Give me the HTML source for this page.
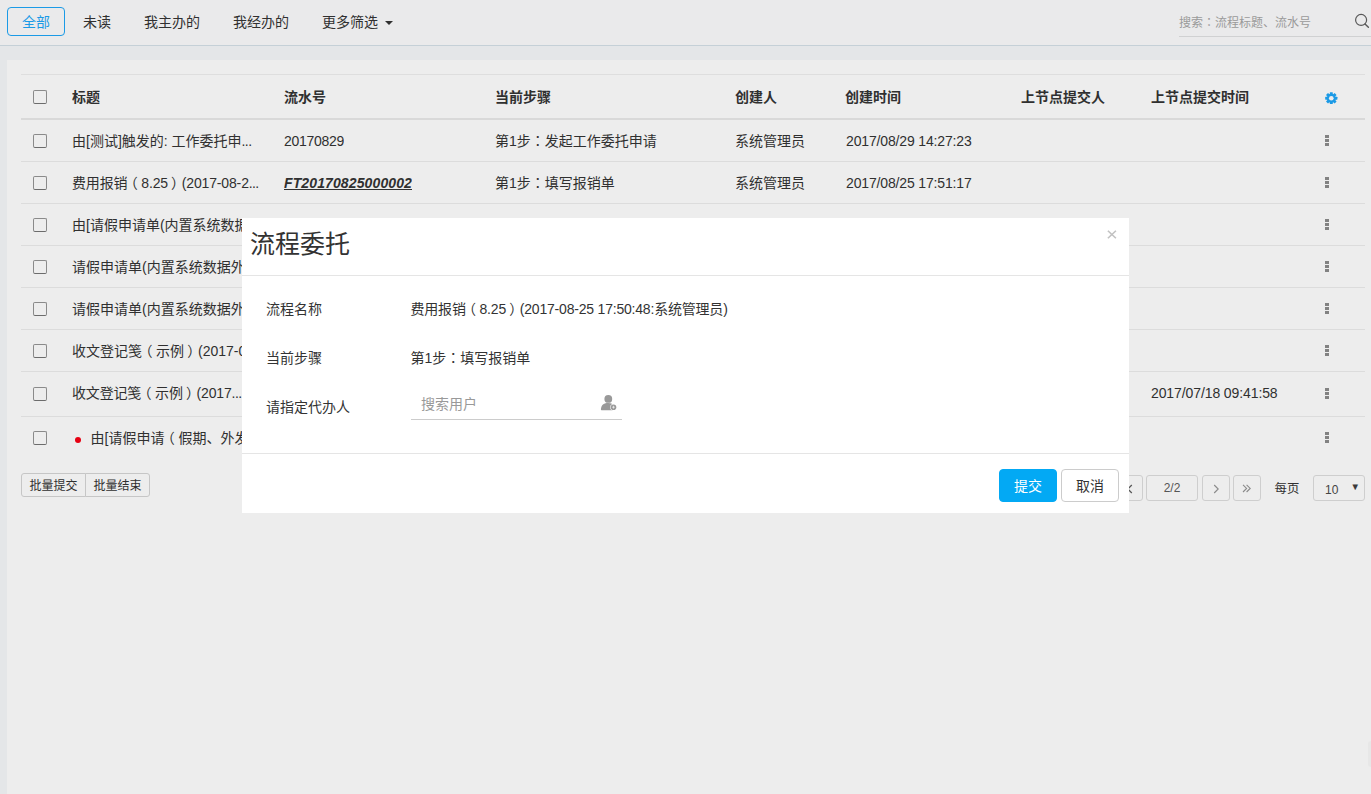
<!DOCTYPE html>
<html lang="zh-CN">
<head>
<meta charset="utf-8">
<title>流程委托</title>
<style>
*{box-sizing:border-box;}
html,body{margin:0;padding:0;}
body{width:1371px;height:794px;overflow:hidden;position:relative;background:#e4e6e8;
  font-family:"Liberation Sans","Noto Sans CJK SC",sans-serif;font-size:14px;color:#303030;}
.abs{position:absolute;}
/* top bar */
.topbar{position:absolute;left:0;top:0;width:1371px;height:46px;background:#eaeaeb;border-bottom:1px solid #c5d0d7;}
.tab{position:absolute;top:7px;height:29px;line-height:28.6px;padding:0 14px;border:1px solid transparent;border-radius:4px;font-size:14px;color:#303030;white-space:nowrap;}
.tab.on{border-color:#1b9ae6;color:#1b9ae6;}
.caret{position:absolute;left:385px;top:21.3px;width:0;height:0;border-left:4.5px solid transparent;border-right:4.5px solid transparent;border-top:4.5px solid #303030;}
.search{position:absolute;left:1179px;top:0;width:192px;height:37px;border-bottom:1px solid #d0d1d2;}
.search>span{position:absolute;left:0;top:13.5px;line-height:18px;font-size:12px;color:#9a9a9a;white-space:nowrap;}
/* panel */
.panel{position:absolute;left:7px;top:60px;width:1364px;height:734px;background:#ededed;}
.tbl{position:absolute;left:21px;top:74px;width:1344px;}
.row{position:absolute;left:0;width:1344px;border-bottom:1px solid #dcdcdc;}
.row.head{top:0;height:46px;border-top:1px solid #dedede;border-bottom:2px solid #d9d9d9;font-weight:bold;}
.cell{position:absolute;top:0;height:100%;padding-top:1px;white-space:nowrap;overflow:hidden;text-overflow:ellipsis;}
.cb{position:absolute;left:12px;width:14px;height:14px;border:1px solid #8a8a8a;border-bottom-color:#6c6c6c;border-radius:2px;background:#ededed;}
.dots{position:absolute;left:1304px;width:4px;height:11px;}
.dots i{display:block;width:3.6px;height:3px;background:#828282;margin-bottom:1px;}
.sn{letter-spacing:.12px;font-style:italic;text-decoration:underline;color:#303030;}
.pl{position:relative;left:-3.6px;}
.pr{position:relative;left:3.2px;}
.el{letter-spacing:-.6px;}
.fc{font-family:"Noto Sans CJK TC",sans-serif;line-height:0;}
.red{position:absolute;left:53.8px;width:6.5px;height:6.5px;border-radius:50%;background:#e60012;}
/* bottom controls */
.bbtn{position:absolute;top:473px;height:24px;line-height:24px;font-size:12px;border:1px solid #c6c6c6;background:#ededed;text-align:center;color:#303030;}
.pg{position:absolute;top:475px;height:26px;border:1px solid #cecece;border-radius:3px;background:#ededed;font-size:12px;line-height:24px;text-align:center;color:#555;}
/* modal */
.modal{position:absolute;left:242px;top:218px;width:887px;height:295px;background:#fff;}
.mhead{position:absolute;left:0;top:0;width:887px;height:58px;border-bottom:1px solid #e5e5e5;}
.mtitle{position:absolute;left:8px;top:8px;font-size:25px;line-height:36px;color:#333;white-space:nowrap;}
.mfoot{position:absolute;left:0;top:235px;width:887px;height:60px;border-top:1px solid #e5e5e5;}
.lbl{position:absolute;left:24px;font-size:14px;line-height:20px;color:#333;white-space:nowrap;}
.val{position:absolute;left:168.5px;font-size:14px;line-height:20px;color:#333;white-space:nowrap;}
.btn{position:absolute;top:251px;width:58px;height:33px;line-height:33px;border-radius:4px;font-size:14px;text-align:center;border:1px solid #ccc;background:#fff;color:#333;}
.btn.pri{background:#03a9f4;border-color:#03a9f4;color:#fff;}
</style>
</head>
<body>

<div class="topbar">
  <div class="tab on" style="left:7px;">全部</div>
  <div class="tab" style="left:68px;">未读</div>
  <div class="tab" style="left:129px;">我主办的</div>
  <div class="tab" style="left:218px;">我经办的</div>
  <div class="tab" style="left:307px;">更多筛选</div>
  <div class="caret"></div>
  <div class="search"><span>搜索<span class="fc" lang="zh-TW">：</span>流程标题、流水号</span>
    <svg class="abs" style="left:174px;top:12px" width="18" height="18" viewBox="0 0 18 18"><circle cx="8.1" cy="7.95" r="5.5" fill="none" stroke="#585858" stroke-width="1.2"/><path d="M12 11.9 L15.4 15.3" stroke="#585858" stroke-width="1.4" stroke-linecap="round"/></svg>
  </div>
</div>

<div class="panel"></div>

<div class="tbl" id="tbl">
  <div class="row head">
    <span class="cb" style="top:15px"></span>
    <div class="cell" style="left:51px;line-height:43px;">标题</div>
    <div class="cell" style="left:263px;line-height:43px;">流水号</div>
    <div class="cell" style="left:474px;line-height:43px;">当前步骤</div>
    <div class="cell" style="left:714px;line-height:43px;">创建人</div>
    <div class="cell" style="left:824px;line-height:43px;">创建时间</div>
    <div class="cell" style="left:1000px;line-height:43px;">上节点提交人</div>
    <div class="cell" style="left:1130px;line-height:43px;">上节点提交时间</div>
    <svg class="abs" style="left:1304.3px;top:16.6px" width="12.6" height="12.6" viewBox="-6.5 -6.5 13 13"><g fill="#1b9ae6"><circle r="4.6"/><rect x="-1.5" y="-6.3" width="3" height="12.6" rx=".4"/><rect x="-6.3" y="-1.5" width="12.6" height="3" rx=".4"/><g transform="rotate(45)"><rect x="-1.5" y="-6.3" width="3" height="12.6" rx=".4"/><rect x="-6.3" y="-1.5" width="12.6" height="3" rx=".4"/></g></g><circle r="2.4" fill="#ededed"/></svg>
  </div>
  <div class="row" style="top:46px;height:42px;">
    <span class="cb" style="top:14px"></span>
    <div class="cell" style="left:51px;width:191px;line-height:41px;">由[测试]触发的: 工作委托申<span class="el">...</span></div>
    <div class="cell" style="left:263px;line-height:41px;letter-spacing:-.3px;">20170829</div>
    <div class="cell" style="left:474px;line-height:41px;">第1步<span class="fc" lang="zh-TW">：</span>发起工作委托申请</div>
    <div class="cell" style="left:714px;line-height:41px;">系统管理员</div>
    <div class="cell" style="left:825px;line-height:41px;letter-spacing:-.15px;">2017/08/29 14:27:23</div>
    <span class="dots" style="top:15px"><i></i><i></i><i></i></span>
  </div>
  <div class="row" style="top:88px;height:42px;">
    <span class="cb" style="top:14px"></span>
    <div class="cell" style="left:51px;width:191px;line-height:41px;"><span style="letter-spacing:-.15px">费用报销<span class="pl">（</span>8.25<span class="pr">）</span>(2017-08-2<span class="el">...</span></span></div>
    <div class="cell" style="left:263px;line-height:41px;"><b class="sn">FT20170825000002</b></div>
    <div class="cell" style="left:474px;line-height:41px;">第1步<span class="fc" lang="zh-TW">：</span>填写报销单</div>
    <div class="cell" style="left:714px;line-height:41px;">系统管理员</div>
    <div class="cell" style="left:825px;line-height:41px;letter-spacing:-.15px;">2017/08/25 17:51:17</div>
    <span class="dots" style="top:15px"><i></i><i></i><i></i></span>
  </div>
  <div class="row" style="top:130px;height:42px;">
    <span class="cb" style="top:14px"></span>
    <div class="cell" style="left:51px;width:191px;line-height:41px;">由[请假申请单(内置系统数据外发)]触发的流程</div>
    <div class="cell" style="left:474px;line-height:41px;">第1步<span class="fc" lang="zh-TW">：</span>发起申请</div>
    <div class="cell" style="left:714px;line-height:41px;">系统管理员</div>
    <div class="cell" style="left:825px;line-height:41px;letter-spacing:-.15px;">2017/08/22 10:12:30</div>
    <span class="dots" style="top:15px"><i></i><i></i><i></i></span>
  </div>
  <div class="row" style="top:172px;height:42px;">
    <span class="cb" style="top:14px"></span>
    <div class="cell" style="left:51px;width:191px;line-height:41px;">请假申请单(内置系统数据外发)(2017-08-22)</div>
    <div class="cell" style="left:474px;line-height:41px;">第1步<span class="fc" lang="zh-TW">：</span>发起申请</div>
    <div class="cell" style="left:714px;line-height:41px;">系统管理员</div>
    <div class="cell" style="left:825px;line-height:41px;letter-spacing:-.15px;">2017/08/22 10:05:11</div>
    <span class="dots" style="top:15px"><i></i><i></i><i></i></span>
  </div>
  <div class="row" style="top:214px;height:42px;">
    <span class="cb" style="top:14px"></span>
    <div class="cell" style="left:51px;width:191px;line-height:41px;">请假申请单(内置系统数据外发)(2017-08-21)</div>
    <div class="cell" style="left:474px;line-height:41px;">第1步<span class="fc" lang="zh-TW">：</span>发起申请</div>
    <div class="cell" style="left:714px;line-height:41px;">系统管理员</div>
    <div class="cell" style="left:825px;line-height:41px;letter-spacing:-.15px;">2017/08/21 16:40:02</div>
    <span class="dots" style="top:15px"><i></i><i></i><i></i></span>
  </div>
  <div class="row" style="top:256px;height:42px;">
    <span class="cb" style="top:14px"></span>
    <div class="cell" style="left:51px;width:191px;line-height:41px;">收文登记笺<span class="pl">（</span>示例<span class="pr">）</span>(2017-07-18 09:45:12)</div>
    <div class="cell" style="left:474px;line-height:41px;">第1步<span class="fc" lang="zh-TW">：</span>收文登记</div>
    <div class="cell" style="left:714px;line-height:41px;">系统管理员</div>
    <div class="cell" style="left:825px;line-height:41px;letter-spacing:-.15px;">2017/07/18 09:45:20</div>
    <span class="dots" style="top:15px"><i></i><i></i><i></i></span>
  </div>
  <div class="row" style="top:298px;height:45px;">
    <span class="cb" style="top:15px"></span>
    <div class="cell" style="left:51px;width:191px;line-height:40px;letter-spacing:-.16px;">收文登记笺<span class="pl">（</span>示例<span class="pr">）</span>(2017<span class="el">...</span></div>
    <div class="cell" style="left:474px;line-height:40px;">第2步<span class="fc" lang="zh-TW">：</span>领导批示</div>
    <div class="cell" style="left:714px;line-height:40px;">系统管理员</div>
    <div class="cell" style="left:825px;line-height:40px;letter-spacing:-.15px;">2017/07/18 09:40:33</div>
    <div class="cell" style="left:1130px;line-height:40px;letter-spacing:-.1px;">2017/07/18 09:41:58</div>
    <span class="dots" style="top:16px"><i></i><i></i><i></i></span>
  </div>
  <div class="row" style="top:343px;height:42px;border-bottom:none;">
    <span class="cb" style="top:14px"></span>
    <span class="red" style="top:19.8px"></span>
    <div class="cell" style="left:69.5px;width:180px;line-height:40px;">由[请假申请<span class="pl">（</span>假期、外发)]触发的流程</div>
    <div class="cell" style="left:474px;line-height:42px;">第1步<span class="fc" lang="zh-TW">：</span>发起申请</div>
    <div class="cell" style="left:714px;line-height:42px;">系统管理员</div>
    <div class="cell" style="left:825px;line-height:42px;letter-spacing:-.15px;">2017/07/17 15:20:41</div>
    <span class="dots" style="top:15px"><i></i><i></i><i></i></span>
  </div>
</div>

<div class="abs" style="left:1368px;top:741px;width:6px;height:26px;border-radius:4px;background:#e7e7e7;"></div>

<!-- batch buttons -->
<div class="bbtn" style="left:21px;width:65px;border-radius:3px 0 0 3px;">批量提交</div>
<div class="bbtn" style="left:85px;width:65px;border-radius:0 3px 3px 0;">批量结束</div>

<!-- pagination -->
<div class="pg" style="left:1083px;width:28px;"><svg class="abs" style="left:8px;top:8.2px" width="10" height="9" viewBox="0 0 10 9"><path d="M9 .8 L5.4 4.4 L9 8 M5.4 .8 L1.8 4.4 L5.4 8" fill="none" stroke="#8a8a8a" stroke-width="1.1"/></svg></div>
<div class="pg" style="left:1115px;width:28px;"><svg class="abs" style="left:9.5px;top:7.5px" width="7" height="10" viewBox="0 0 7 10"><path d="M5.8 1 L1.8 5 L5.8 9" fill="none" stroke="#555" stroke-width="1.2"/></svg></div>
<div class="pg" style="left:1146px;width:52px;">2/2</div>
<div class="pg" style="left:1202px;width:28px;"><svg class="abs" style="left:9.5px;top:7.5px" width="7" height="10" viewBox="0 0 7 10"><path d="M1.2 1 L5.2 5 L1.2 9" fill="none" stroke="#8a8a8a" stroke-width="1.1"/></svg></div>
<div class="pg" style="left:1233px;width:28px;"><svg class="abs" style="left:8px;top:8.2px" width="10" height="9" viewBox="0 0 10 9"><path d="M1 .8 L4.6 4.4 L1 8 M4.6 .8 L8.2 4.4 L4.6 8" fill="none" stroke="#8a8a8a" stroke-width="1.1"/></svg></div>
<div class="abs" style="left:1274.5px;top:480px;font-size:12.4px;line-height:18px;color:#303030;white-space:nowrap;">每页</div>
<div class="pg" style="left:1313px;width:52px;text-align:left;padding-left:11px;padding-top:2px;color:#444;">10<span class="abs" style="left:36.5px;top:-1px;font-size:9.5px;color:#3a3a3a;">&#9660;</span></div>

<!-- modal -->
<div class="modal">
  <div class="mhead">
    <div class="mtitle">流程委托</div>
    <svg class="abs" style="left:864.9px;top:11.9px" width="9.8" height="9" viewBox="0 0 10 10" preserveAspectRatio="none"><path d="M.9 .9 L9.1 9.1 M9.1 .9 L.9 9.1" stroke="#c2c2c2" stroke-width="1.6" fill="none"/></svg>
  </div>
  <div class="lbl" style="top:81px;">流程名称</div>
  <div class="val" style="top:81px;letter-spacing:-.2px;">费用报销<span class="pl">（</span>8.25<span class="pr">）</span>(2017-08-25 17:50:48:系统管理员)</div>
  <div class="lbl" style="top:130px;">当前步骤</div>
  <div class="val" style="top:130px;">第1步<span class="fc" lang="zh-TW">：</span>填写报销单</div>
  <div class="lbl" style="top:179px;">请指定代办人</div>
  <div class="abs" style="left:169px;top:169px;width:211px;height:33px;border-bottom:1px solid #ccc;">
    <span class="abs" style="left:10px;top:7px;line-height:20px;font-size:14px;color:#999;white-space:nowrap;">搜索用户</span>
    <svg class="abs" style="left:188.3px;top:7.4px" width="18" height="17" viewBox="0 0 18 17"><g fill="#999"><circle cx="9.3" cy="4.9" r="3.9"/><path d="M2.4 16.3 C1.9 16.3 1.9 15.6 2 14.6 C2.5 10.4 5.2 8.9 9.3 8.9 C12 8.9 13.6 9.8 13.6 11.2 L13.6 16.3 Z"/></g><circle cx="14.5" cy="13.2" r="3.3" fill="#fff"/><circle cx="14.5" cy="13.2" r="2.8" fill="#999"/><path d="M14.5 11.8 V14.6 M13.1 13.2 H15.9" stroke="#fff" stroke-width=".6"/></svg>
  </div>
  <div class="mfoot"></div>
  <div class="btn pri" style="left:757px;">提交</div>
  <div class="btn" style="left:819px;">取消</div>
</div>

</body>
</html>
